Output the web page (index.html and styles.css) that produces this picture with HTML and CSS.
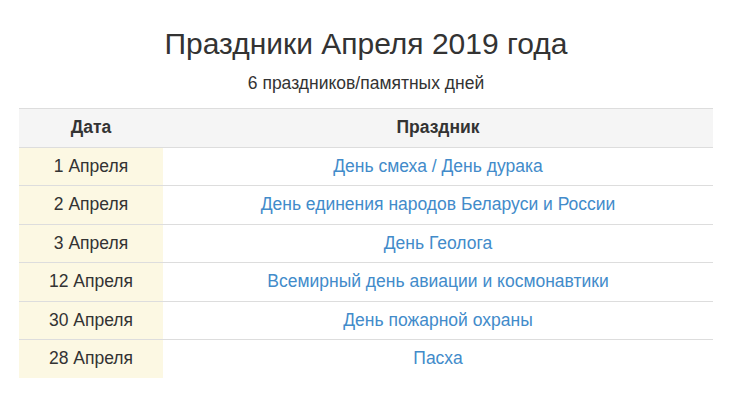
FILE: index.html
```html
<!DOCTYPE html>
<html lang="ru">
<head>
<meta charset="utf-8">
<link rel="stylesheet" href="styles.css">
</head>
<body>
<div class="page">
  <h1 class="title">Праздники Апреля 2019 года</h1>
  <p class="subtitle">6 праздников/памятных дней</p>
  <table class="holidays">
    <thead>
      <tr><th class="col-date">Дата</th><th>Праздник</th></tr>
    </thead>
    <tbody>
      <tr><td class="date">1 Апреля</td><td><a href="#">День смеха / День дурака</a></td></tr>
      <tr><td class="date">2 Апреля</td><td><a href="#">День единения народов Беларуси и России</a></td></tr>
      <tr><td class="date">3 Апреля</td><td><a href="#">День Геолога</a></td></tr>
      <tr><td class="date">12 Апреля</td><td><a href="#">Всемирный день авиации и космонавтики</a></td></tr>
      <tr><td class="date">30 Апреля</td><td><a href="#">День пожарной охраны</a></td></tr>
      <tr><td class="date">28 Апреля</td><td><a href="#">Пасха</a></td></tr>
    </tbody>
  </table>
</div>
</body>
</html>
```
FILE: styles.css
```css
html, body {
  margin: 0;
  padding: 0;
  background: #fff;
}
body {
  font-family: "Liberation Sans", Arial, sans-serif;
  color: #333;
}
.page {
  padding: 0 18px 0 19px;
}
.title {
  margin: 0;
  padding-top: 26px;
  font-size: 30px;
  font-weight: normal;
  line-height: 36px;
  text-align: center;
}
.subtitle {
  margin: 10px 0 14px;
  font-size: 17.5px;
  line-height: 22px;
  text-align: center;
}
.holidays {
  width: 100%;
  border-collapse: collapse;
  font-size: 17.5px;
}
.holidays th,
.holidays td {
  padding: 8px;
  line-height: 21.5px;
  text-align: center;
  border-top: 1px solid #ddd;
}
.holidays thead th {
  background: #f5f5f5;
  font-weight: bold;
  border-bottom: 1px solid #ddd;
}
.holidays .col-date {
  width: 128px;
}
.holidays .date {
  background: #fcf8e3;
}
.holidays a {
  color: #428bca;
  text-decoration: none;
}
```
